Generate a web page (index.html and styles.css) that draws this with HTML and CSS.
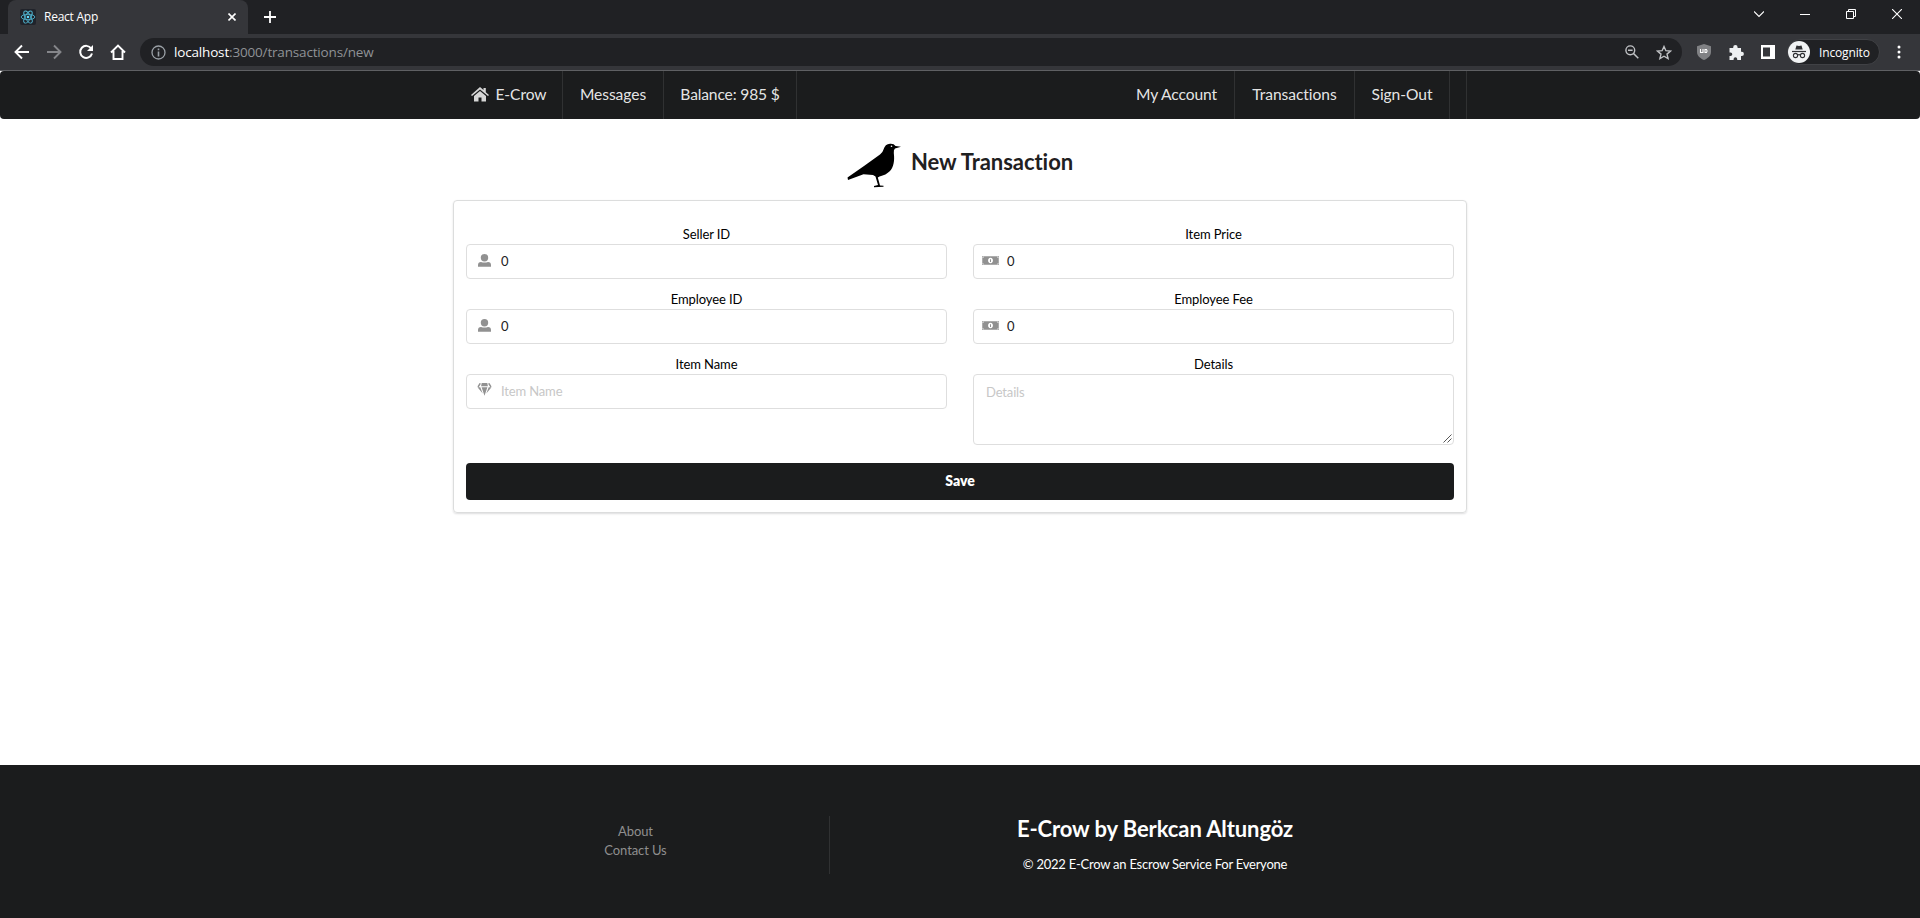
FILE: index.html
```html
<!DOCTYPE html>
<html lang="en">
<head>
<meta charset="utf-8">
<title>React App</title>
<link rel="stylesheet" href="styles.css">
</head>
<body>
<div class="tabstrip">
  <div class="tab">
    <svg class="fav" width="16" height="16" viewBox="0 0 16 16"><rect width="16" height="16" rx="2" fill="#20232a"/><g fill="none" stroke="#4fb3cf" stroke-width=".9"><ellipse cx="8" cy="8" rx="6.8" ry="2.7"/><ellipse cx="8" cy="8" rx="6.8" ry="2.7" transform="rotate(60 8 8)"/><ellipse cx="8" cy="8" rx="6.8" ry="2.7" transform="rotate(120 8 8)"/></g><circle cx="8" cy="8" r="1.3" fill="#61dafb"/></svg>
    <span class="tab-title">React App</span>
    <svg class="tab-close" width="8" height="8" viewBox="0 0 8 8"><path d="M.5.5l7 7M7.5.5l-7 7" stroke="#fff" stroke-width="1.6"/></svg>
  </div>
  <svg class="plus" width="12" height="12" viewBox="0 0 12 12"><path d="M6 0v12M0 6h12" stroke="#fff" stroke-width="1.8"/></svg>
  <div class="window-controls">
    <svg width="10" height="10" viewBox="0 0 10 10"><path d="M0 2.5l5 5 5-5" fill="none" stroke="#fff" stroke-width="1.1"/></svg>
    <svg width="10" height="10" viewBox="0 0 10 10"><path d="M0 5.5h10" stroke="#fff"/></svg>
    <svg width="10" height="10" viewBox="0 0 10 10"><path d="M.5 2.5h7v7h-7zM2.500 2.500V.5h7v7h-2" fill="none" stroke="#fff"/></svg>
    <svg width="10" height="10" viewBox="0 0 10 10"><path d="M0 0l10 10M10 0L0 10" stroke="#fff" stroke-width="1.1"/></svg>
  </div>
</div>
<div class="toolbar">
  <div class="nav-buttons">
    <svg width="16" height="16" viewBox="0 0 16 16"><path d="M15 8H2M8 1.500L1.500 8 8 14.500" fill="none" stroke="#fff" stroke-width="1.9"/></svg>
    <svg width="16" height="16" viewBox="0 0 16 16"><path d="M1 8h13M8 1.500L14.500 8 8 14.500" fill="none" stroke="#85868a" stroke-width="1.9"/></svg>
    <svg width="16" height="16" viewBox="0 0 16 16"><path d="M13.200 4.500A6 6 0 1 0 14 9.500" fill="none" stroke="#fff" stroke-width="2"/><path d="M15 1v6H9z" fill="#fff"/></svg>
    <svg width="16" height="16" viewBox="0 0 16 16"><path d="M1 8.500L8 1.500l7 7M3.500 7v8h9V7" fill="none" stroke="#fff" stroke-width="1.9"/></svg>
  </div>
  <div class="omnibox">
    <svg width="15" height="15" viewBox="0 0 15 15"><circle cx="7.500" cy="7.500" r="6.500" fill="none" stroke="#9aa0a6" stroke-width="1.3"/><path d="M7.500 3.500v1.700M7.500 6.500V11.500" stroke="#9aa0a6" stroke-width="1.600"/></svg>
    <span class="url"><b>localhost</b>:3000/transactions/new</span>
    <svg class="magnifier" width="14" height="14" viewBox="0 0 14 14"><circle cx="5.300" cy="5.300" r="4.400" fill="none" stroke="#c0c2c5" stroke-width="1.400"/><path d="M3 5.300h4.600M8.500 8.500l4.800 4.800" stroke="#c0c2c5" stroke-width="1.500"/></svg>
    <svg class="star" width="16" height="15" viewBox="0 0 16 15"><path d="M8 1.500l1.900 4.200 4.600.4-3.500 3 1.100 4.500L8 11.200l-4.100 2.400L5 9.100l-3.500-3 4.600-.4z" fill="none" stroke="#c0c2c5" stroke-width="1.400"/></svg>
  </div>
  <div class="extensions">
    <svg width="14" height="16" viewBox="0 0 14 16"><path d="M7 0l7 2.200V8c0 4-3.500 6.500-7 8-3.500-1.500-7-4-7-8V2.200z" fill="#808184"/><path d="M3.500 5v3.500H6V5M8 5.500v3h1.500q1.200-1.500 0-3z" fill="none" stroke="#fff" stroke-width="1.1"/></svg>
    <svg width="15" height="15" viewBox="0 0 15 15"><path d="M1 3h3.200V2.200a2.200 2.200 0 0 1 4.400 0V3H12v3.800h.8a2.100 2.100 0 0 1 0 4.200H12v4H8.200v-1a1.800 1.800 0 0 0-3.600 0v1H.5v-4h1a1.800 1.800 0 0 0 0-3.600h-1V3z" fill="#eef0f2"/></svg>
    <svg class="panel" width="14" height="14" viewBox="0 0 14 14"><path d="M0 0h14v14H0zM2 2.500v9h7v-9z" fill="#fff" fill-rule="evenodd"/></svg>
    <div class="incognito">
      <svg width="22" height="22" viewBox="0 0 22 22"><circle cx="11" cy="11" r="11" fill="#f1f3f4"/><path d="M7.300 8.500L8.500 4.500l2.500.6 2.500-.6 1.200 4z" fill="#303134"/><path d="M4 10.500h14" stroke="#303134" stroke-width="1.200"/><g fill="none" stroke="#303134" stroke-width="1.100"><circle cx="7.500" cy="14.500" r="2.100"/><circle cx="14.500" cy="14.500" r="2.100"/><path d="M9.600 14q1.400-.7 2.800 0"/></g></svg>
      <span>Incognito</span>
    </div>
    <svg class="kebab" width="4" height="14" viewBox="0 0 4 14"><g fill="#fff"><circle cx="2" cy="2" r="1.500"/><circle cx="2" cy="7" r="1.500"/><circle cx="2" cy="12" r="1.500"/></g></svg>
  </div>
</div>
<div class="page">
  <nav class="menu">
    <div class="menu-inner">
      <a class="item brand"><svg width="18" height="15" viewBox="0 0 18 15"><path d="M9 0l3.500 3V1h2.300v4.200L18 8l-1 1.100L9 2.600 1 9.100 0 8z" fill="#d6d6d6"/><path d="M9 4l6 5v5.500h-4.500v-4h-3v4H3V9z" fill="#d6d6d6"/></svg><span>E-Crow</span></a>
      <a class="item messages">Messages</a>
      <a class="item balance">Balance: 985 $</a>
      <span class="spacer"></span>
      <a class="item account">My Account</a>
      <a class="item trans">Transactions</a>
      <a class="item signout">Sign-Out</a>
      <span class="item blank"></span>
    </div>
  </nav>
  <main class="content">
    <h2 class="title">
      <svg width="54" height="45" viewBox="0 0 54 45"><path d="M.5 34.500L17 23 33 11.500Q36 9 36.500 6.500 38 1 43 .7q4-.3 5.500 2.300l5.500.8-6 1.800Q46.500 7 46.800 10c1 8-.3 14-3.800 18q-4 4-10.500 5.500l-1.700 1 2.200 8 3.500.3v1l-9.500.4v-1.200l4-.9-2.500-8.500L26 32 16.500 31.300 1 37z"/><circle cx="44.500" cy="3.200" r=".8" fill="#fff"/></svg>
      <span>New Transaction</span>
    </h2>
    <form class="card">
      <div class="fields">
        <div class="field"><label>Seller ID</label><div class="input"><svg width="13" height="13" viewBox="0 0 13 13"><circle cx="6.500" cy="3.700" r="3.700"/><path d="M0 12.800V11q0-2.800 3-3 3.500 1.200 7 0 3 .2 3 3v1.800z"/></svg><span>0</span></div></div>
        <div class="field"><label>Item Price</label><div class="input money"><svg width="17" height="9" viewBox="0 0 17 9"><path fill-rule="evenodd" d="M1.800.5h13.400q0 1.500 1.300 1.500v5q-1.300 0-1.300 1.500H1.800Q1.800 7 .5 7V2q1.300 0 1.300-1.500zM8.500 1.700a2.400 2.800 0 1 0 .01 0z"/><path d="M0 0h17v9H0z" fill="none" stroke="#919191"/><path d="M8 3.200h1v2.700h-1z"/></svg><span>0</span></div></div>
        <div class="field"><label>Employee ID</label><div class="input"><svg width="13" height="13" viewBox="0 0 13 13"><circle cx="6.500" cy="3.700" r="3.700"/><path d="M0 12.800V11q0-2.800 3-3 3.500 1.200 7 0 3 .2 3 3v1.800z"/></svg><span>0</span></div></div>
        <div class="field"><label>Employee Fee</label><div class="input money"><svg width="17" height="9" viewBox="0 0 17 9"><path fill-rule="evenodd" d="M1.800.5h13.400q0 1.500 1.300 1.500v5q-1.300 0-1.300 1.500H1.800Q1.800 7 .5 7V2q1.300 0 1.300-1.500zM8.500 1.700a2.400 2.800 0 1 0 .01 0z"/><path d="M0 0h17v9H0z" fill="none" stroke="#919191"/><path d="M8 3.200h1v2.700h-1z"/></svg><span>0</span></div></div>
        <div class="field"><label>Item Name</label><div class="input gem"><svg width="15" height="13" viewBox="0 0 15 13"><path d="M4.700 0h5.600l.6 3.200H4.100zM4.600 4.200h5.800L7.500 12.800zM.5 4.200h2.800l2.400 6.300zM14.500 4.200h-2.800L9.300 10.500z"/><path d="M3.300.3L1 3.800M11.700.3L14 3.800" fill="none" stroke="#919191" stroke-width="1.500"/></svg><span class="placeholder">Item Name</span></div></div>
        <div class="field"><label>Details</label><div class="textarea"><span class="placeholder">Details</span><svg class="grip" width="9" height="9" viewBox="0 0 9 9"><path d="M.5 8.500l8-8M4.500 8.500l4-4" stroke="#444" stroke-width=".9"/></svg></div></div>
      </div>
      <button class="save" type="button">Save</button>
    </form>
  </main>
  <footer class="footer">
    <div class="links"><a>About</a><a>Contact Us</a></div>
    <div class="about"><h2>E-Crow by Berkcan Altungöz</h2><p>© 2022 E-Crow an Escrow Service For Everyone</p></div>
  </footer>
</div>
</body>
</html>
```
FILE: styles.css
```css
* { box-sizing: border-box; }
body { margin: 0; height: 918px; overflow: hidden; display: flex; flex-direction: column; background: #fff; font-family: Lato, "Liberation Sans", sans-serif; font-variant-ligatures: none; }
svg { display: block; flex: none; }

/* Browser chrome */
.tabstrip { height: 34px; flex: none; display: flex; align-items: flex-start; background: #202124; font-family: "Open Sans", "Noto Sans", sans-serif; }
.tab { width: 240px; height: 34px; margin-left: 8px; padding: 0 12px; display: flex; align-items: center; background: #35363a; border-radius: 8px 8px 0 0; color: #fff; font-size: 12px; }
.tab-title { margin: -1px 0 0 8px; letter-spacing: -.25px; flex: 1; }
.plus { margin: 11px 0 0 16px; }
.window-controls { margin: 9px 18px 0 auto; display: flex; gap: 36px; }
.toolbar { height: 37px; flex: none; display: flex; align-items: center; background: #35363a; border-bottom: 1px solid #5f6063; font-family: "Open Sans", "Noto Sans", sans-serif; }
.nav-buttons { width: 140px; padding-left: 14px; display: flex; gap: 16px; }
.omnibox { width: 1542px; height: 28px; padding: 0 10px 0 11px; display: flex; align-items: center; background: #202124; border-radius: 14px; }
.url { margin-left: 8px; flex: 1; color: #8f9296; font-size: 13.5px; letter-spacing: -.17px; }
.url b { color: #fff; font-weight: 400; }
.magnifier { margin-right: 17px; }
.extensions { flex: 1; display: flex; align-items: center; padding-left: 15px; gap: 18px; }
.panel { margin-left: -1px; }
.incognito { width: 93px; height: 26px; margin-left: -6px; display: flex; align-items: center; gap: 9px; background: #202124; border: 1px solid #404145; border-radius: 13px; color: #fff; font-size: 12px; letter-spacing: -.15px; }
.kebab { margin-left: -1px; }

/* Site */
.page { flex: 1; display: flex; flex-direction: column; }
.menu { height: 48px; background: #1b1c1d; border-radius: 4px; display: flex; justify-content: center; }
.menu-inner { width: 1014px; display: flex; }
.item { display: flex; align-items: center; justify-content: center; border-right: 1px solid #303132; color: rgba(255,255,255,.9); font-size: 15.6px; letter-spacing: -.06px; padding-bottom: 2px; white-space: nowrap; }
.brand { width: 110px; padding-left: 3px; gap: 6px; }
.messages { width: 101px; }
.balance { width: 133px; letter-spacing: -.15px; }
.spacer { flex: 1; }
.account { width: 116px; letter-spacing: -.12px; }
.trans { width: 120px; }
.signout { width: 95px; }
.blank { width: 17px; }
.content { flex: 1; display: flex; flex-direction: column; align-items: center; }
.title { height: 81px; margin: 0; padding-top: 25px; display: flex; gap: 10px; color: #1f2021; font-size: 22px; font-weight: 700; line-height: 36px; letter-spacing: -.05px; }
.title svg { margin-top: -1px; }
.card { width: 1014px; height: 313px; padding: 24px 12px 12px; border: 1px solid #dcdddd; border-radius: 4px; box-shadow: 0 1px 2px rgba(34,36,38,.15); }
.fields { display: grid; grid-template-columns: 1fr 1fr; column-gap: 26px; row-gap: 11px; }
.field label { display: block; height: 19px; line-height: 19px; text-align: center; font-size: 13px; letter-spacing: -.1px; color: #000; }
.input { height: 35px; padding: 0 0 1px 11px; display: flex; align-items: center; border: 1px solid #dedede; border-radius: 4px; font-size: 13px; letter-spacing: -.1px; color: #222; fill: #919191; }
.input svg { margin: -1px 10px 0 0; }
.input.money { padding-left: 8px; }
.input.money svg { margin-right: 8px; }
.input.gem { padding-left: 10px; }
.input.gem svg { margin: -3px 9px 0 0; }
.placeholder { color: #c7c7c7; letter-spacing: -.15px; }
.textarea { position: relative; height: 71px; padding: 9px 12px; border: 1px solid #dedede; border-radius: 4px; font-size: 13px; line-height: 17px; }
.grip { position: absolute; right: 1px; bottom: 1px; }
.save { display: block; width: 100%; height: 37px; margin-top: 18px; padding-bottom: 3px; border: 0; border-radius: 4px; background: #1b1c1d; color: #fff; font: 800 14px Lato, sans-serif; }
.footer { height: 153px; padding: 51px 440px 0 442px; display: flex; align-items: flex-start; background: #1b1c1d; color: #fff; text-align: center; }
.links { width: 388px; height: 58px; padding-top: 6px; border-right: 1px solid #303132; display: flex; flex-direction: column; font-size: 13px; letter-spacing: -.1px; line-height: 19px; color: #8f8f8f; }
.about { width: 650px; }
.about h2 { margin: 1px 0 0; font-size: 22px; line-height: 24px; letter-spacing: -.1px; }
.about p { margin: 15px 0 0; font-size: 13px; line-height: 17px; letter-spacing: -.24px; }
```
